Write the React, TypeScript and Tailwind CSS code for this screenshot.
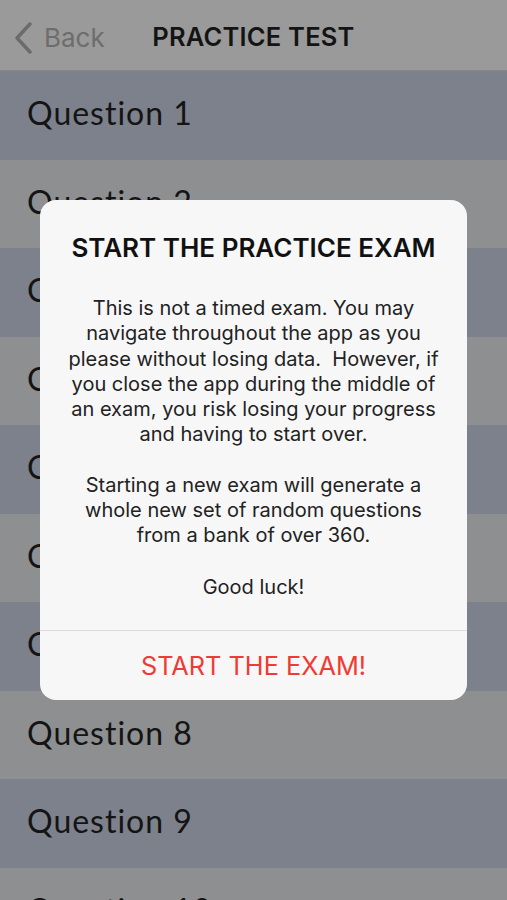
const questions = Array.from({ length: 10 }, (_, i) => `Question ${i + 1}`)

function ChevronLeft() {
  return (
    <svg width="20" height="34" viewBox="0 0 20 34" fill="none" aria-hidden="true">
      <path d="M17 3 L4 17 L17 31" stroke="#6b6b6b" strokeWidth="3.5" strokeLinecap="round" strokeLinejoin="round" />
    </svg>
  )
}

export default function App() {
  return (
    <div className="relative w-[507px] h-[900px] overflow-hidden bg-[#8e8f91] font-['Inter','Liberation_Sans',sans-serif]">
      {/* Nav bar */}
      <div className="relative h-[71px] flex items-center pt-[5px] bg-[#9a9a9a] border-b border-[#878787]">
        <div className="flex items-center gap-[11px] pl-[13px]">
          <ChevronLeft />
          <span className="text-[26px] text-[#6d6d6d] leading-none">Back</span>
        </div>
        <h1 className="absolute inset-x-0 text-center text-[25.5px] font-semibold text-[#141414] tracking-[0.2px] pointer-events-none">
          PRACTICE TEST
        </h1>
      </div>

      {/* Question list */}
      <div className="flex flex-col">
        {questions.map((q, i) => (
          <div
            key={q}
            className={`h-[88.5px] flex items-center pl-[27px] pb-[4px] ${i % 2 === 0 ? 'bg-[#7c818b]' : 'bg-[#8e8f91]'}`}
          >
            <span className="text-[32px] text-[#141414] font-['Lato',sans-serif] tracking-[1px]">{q}</span>
          </div>
        ))}
      </div>

      {/* Alert */}
      <div className="absolute left-[40px] top-[200px] w-[427px] h-[500px] rounded-[16px] bg-[#f7f7f7] flex flex-col overflow-hidden">
        <div className="flex-1 flex flex-col items-center px-[24px] pt-[30px]">
          <h2 className="text-[26px] font-semibold text-[#111] leading-[36px]">START THE PRACTICE EXAM</h2>
          <div className="mt-[30px] text-[20px] leading-[25.3px] text-[#222] text-center">
            <p>
              This is not a timed exam. You may navigate throughout the app as you please without losing data.&nbsp; However, if you close the app during the middle of an exam, you risk losing your progress and having to start over.
            </p>
            <p className="mt-[25px]">
              Starting a new exam will generate a whole new set of random questions from a bank of over 360.
            </p>
            <p className="mt-[26px]">Good luck!</p>
          </div>
        </div>
        <div className="h-[70px] border-t border-[#dcdcdc] flex items-center justify-center">
          <span className="text-[25.3px] text-[#f03a34]">START THE EXAM!</span>
        </div>
      </div>
    </div>
  )
}
